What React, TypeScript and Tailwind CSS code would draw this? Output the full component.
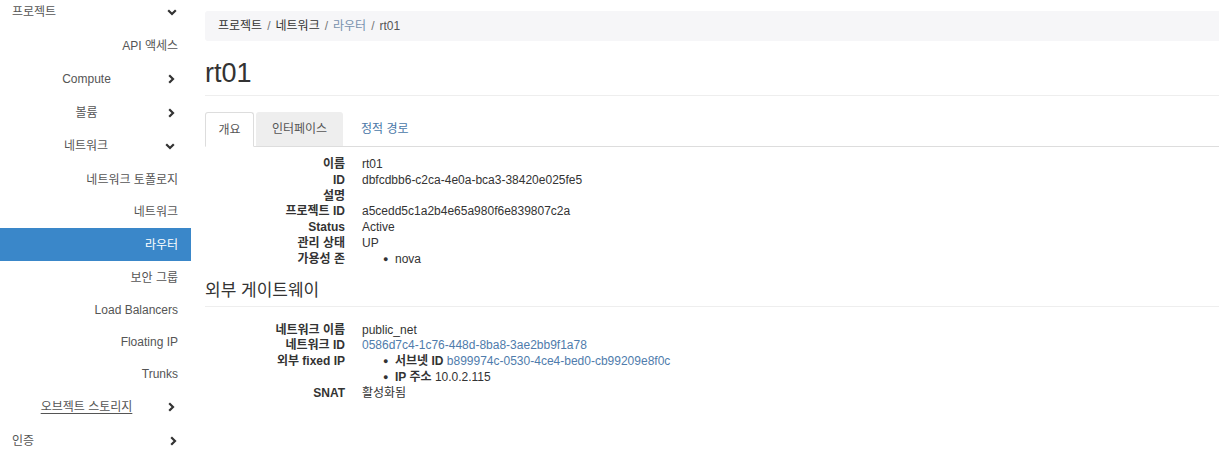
import React from 'react';

const font = { fontFamily: '"Liberation Sans", "Noto Sans CJK KR", sans-serif' };

const ChevronDown = () => (
  <svg width="10" height="7" viewBox="0 0 10 7" className="text-[#333]">
    <path d="M1.2 1.2 L5 5 L8.8 1.2" fill="none" stroke="currentColor" strokeWidth="2.2" />
  </svg>
);

const ChevronRight = () => (
  <svg width="7" height="10" viewBox="0 0 7 10" className="text-[#333]">
    <path d="M1.2 1.2 L5 5 L1.2 8.8" fill="none" stroke="currentColor" strokeWidth="2.2" />
  </svg>
);

type NavRow =
  | { kind: 'top'; label: string; open: boolean; h: string }
  | { kind: 'group'; label: string; open: boolean; underline?: boolean; h: string }
  | { kind: 'item'; label: string; active?: boolean; h: string };

const nav: NavRow[] = [
  { kind: 'top', label: '프로젝트', open: true, h: 'h-[34px]' },
  { kind: 'item', label: 'API 액세스', h: 'h-[33px]' },
  { kind: 'group', label: 'Compute', open: false, h: 'h-[34px]' },
  { kind: 'group', label: '볼륨', open: false, h: 'h-[33px]' },
  { kind: 'group', label: '네트워크', open: true, h: 'h-[34px]' },
  { kind: 'item', label: '네트워크 토폴로지', h: 'h-[33px]' },
  { kind: 'item', label: '네트워크', h: 'h-[32px]' },
  { kind: 'item', label: '라우터', active: true, h: 'h-[33px]' },
  { kind: 'item', label: '보안 그룹', h: 'h-[33px]' },
  { kind: 'item', label: 'Load Balancers', h: 'h-[32px]' },
  { kind: 'item', label: 'Floating IP', h: 'h-[32px]' },
  { kind: 'item', label: 'Trunks', h: 'h-[32px]' },
  { kind: 'group', label: '오브젝트 스토리지', open: false, underline: true, h: 'h-[34px]' },
  { kind: 'top', label: '인증', open: false, h: 'h-[33px]' },
];

function Sidebar() {
  return (
    <aside className="w-[191px] shrink-0 bg-white text-[12px] text-[#555] -mt-[5px]">
      {nav.map((row, i) => {
        if (row.kind === 'item') {
          return (
            <div
              key={i}
              className={
                row.h +
                ' flex items-center justify-end pr-[13px] ' +
                (row.active ? 'bg-[#3a87c9] text-white' : '')
              }
            >
              {row.label}
            </div>
          );
        }
        if (row.kind === 'top') {
          return (
            <div key={i} className={row.h + ' flex items-center pl-[12px] pr-[14px]'}>
              <span className="flex-1">{row.label}</span>
              {row.open ? <ChevronDown /> : <ChevronRight />}
            </div>
          );
        }
        return (
          <div key={i} className={row.h + ' flex items-center pr-[16px]'}>
            <span className={'w-[175px] text-center ' + (row.underline ? 'underline underline-offset-2' : '')}>
              {row.label}
            </span>
            {row.open ? (
              <span className="-ml-[7px]"><ChevronDown /></span>
            ) : (
              <span className="-ml-[5px]"><ChevronRight /></span>
            )}
          </div>
        );
      })}
    </aside>
  );
}

function Row({ label, children }: { label: string; children?: React.ReactNode }) {
  return (
    <div className="flex leading-[15.8px]">
      <dt className="w-[140px] text-right font-bold text-[#333] shrink-0">{label}</dt>
      <dd className="ml-[17px] text-[#333]">{children}</dd>
    </div>
  );
}

function Bullet({ children }: { children: React.ReactNode }) {
  return (
    <div className="flex items-center pl-[21px]">
      <span className="w-[12px] text-[9px]">●</span>
      <span>{children}</span>
    </div>
  );
}

function Main() {
  return (
    <main className="flex-1 pl-[205px] -ml-[191px] text-[12px] text-[#333]">
      <div className="mt-[11px] h-[30px] bg-[#f6f6f8] rounded-l-[3px] flex items-center pl-[13px] text-[12px]">
        <span className="text-[#333]">프로젝트</span>
        <span className="px-[5px] text-[#777]">/</span>
        <span className="text-[#333]">네트워크</span>
        <span className="px-[5px] text-[#777]">/</span>
        <span className="text-[#7891ad]">라우터</span>
        <span className="px-[5px] text-[#777]">/</span>
        <span className="text-[#555]">rt01</span>
      </div>

      <div className="pt-[17px] pb-[7px] border-b border-[#eee]">
        <h1 className="text-[27px] leading-[30px] text-[#333]">rt01</h1>
      </div>

      <div className="mt-[16px] flex border-b border-[#ddd] h-[35px]">
        <div className="w-[49px] justify-center flex items-center border border-[#ddd] border-b-white bg-white rounded-t-[3px] -mb-px text-[#555]">
          개요
        </div>
        <div className="ml-[2px] w-[87px] justify-center flex items-center bg-[#eee] rounded-t-[3px] text-[#555]">
          인터페이스
        </div>
        <div className="ml-[2px] px-[16px] flex items-center text-[#4a78a8]">정적 경로</div>
      </div>

      <dl className="mt-[10px]">
        <Row label="이름">rt01</Row>
        <Row label="ID">dbfcdbb6-c2ca-4e0a-bca3-38420e025fe5</Row>
        <Row label="설명"> </Row>
        <Row label="프로젝트 ID">a5cedd5c1a2b4e65a980f6e839807c2a</Row>
        <Row label="Status">Active</Row>
        <Row label="관리 상태">UP</Row>
        <Row label="가용성 존">
          <Bullet>nova</Bullet>
        </Row>
      </dl>

      <div className="mt-[13px] pb-[5px] border-b border-[#eee]">
        <h3 className="text-[17px] leading-[20px] text-[#333]">외부 게이트웨이</h3>
      </div>

      <dl className="mt-[16px]">
        <Row label="네트워크 이름">public_net</Row>
        <Row label="네트워크 ID">
          <span className="text-[#4f7cac]">0586d7c4-1c76-448d-8ba8-3ae2bb9f1a78</span>
        </Row>
        <Row label="외부 fixed IP">
          <Bullet>
            <b>서브넷 ID</b> <span className="text-[#4f7cac]">b899974c-0530-4ce4-bed0-cb99209e8f0c</span>
          </Bullet>
          <Bullet>
            <b>IP 주소</b> 10.0.2.115
          </Bullet>
        </Row>
        <Row label="SNAT">활성화됨</Row>
      </dl>
    </main>
  );
}

export default function App() {
  return (
    <div className="w-[1219px] h-[475px] overflow-hidden bg-white flex" style={font}>
      <Sidebar />
      <Main />
    </div>
  );
}
